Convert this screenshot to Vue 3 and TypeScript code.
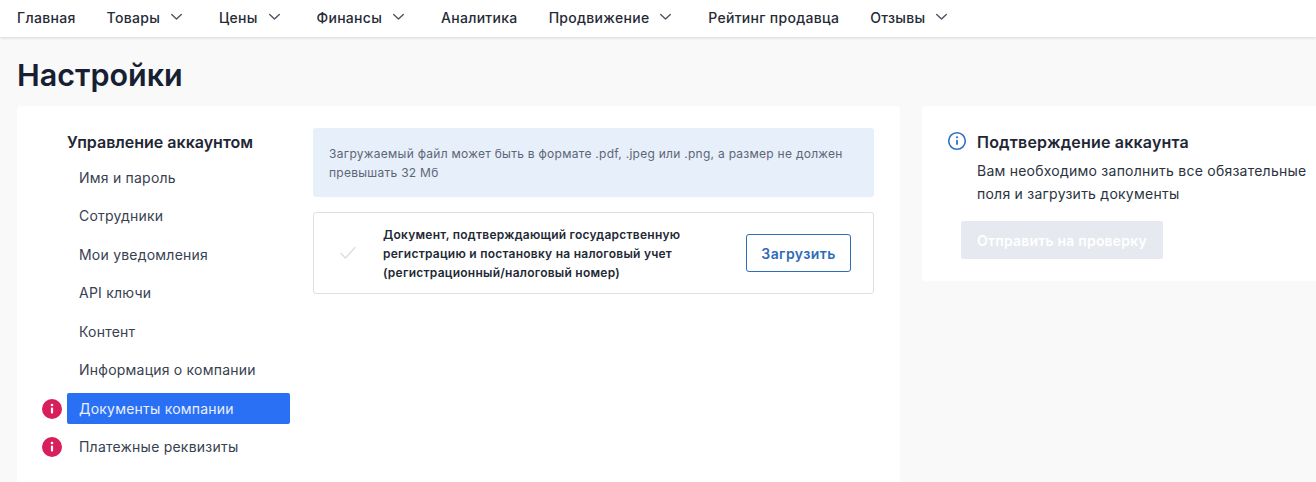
<script setup lang="ts">
interface NavItem { label: string; menu: boolean }
interface SideItem { label: string; active?: boolean; alert?: boolean }

const nav: NavItem[] = [
  { label: 'Главная', menu: false },
  { label: 'Товары', menu: true },
  { label: 'Цены', menu: true },
  { label: 'Финансы', menu: true },
  { label: 'Аналитика', menu: false },
  { label: 'Продвижение', menu: true },
  { label: 'Рейтинг продавца', menu: false },
  { label: 'Отзывы', menu: true },
]
const side: SideItem[] = [
  { label: 'Имя и пароль' },
  { label: 'Сотрудники' },
  { label: 'Мои уведомления' },
  { label: 'API ключи' },
  { label: 'Контент' },
  { label: 'Информация о компании' },
  { label: 'Документы компании', active: true, alert: true },
  { label: 'Платежные реквизиты', alert: true },
]
</script>

<template>
  <div class="page">
    <header class="topbar">
      <div v-for="item in nav" :key="item.label" class="nav-item">
        <span>{{ item.label }}</span>
        <svg v-if="item.menu" class="chev" width="13" height="8" viewBox="0 0 13 8" fill="none">
          <path d="M1.7 1.5 6.5 6l4.8-4.5" stroke="#4b5563" stroke-width="1.4" stroke-linecap="round" stroke-linejoin="round" />
        </svg>
      </div>
    </header>

    <h1 class="title">Настройки</h1>

    <div class="columns">
      <main class="card main-card">
        <aside class="sidebar">
          <h2 class="side-title">Управление аккаунтом</h2>
          <ul class="side-list">
            <li v-for="item in side" :key="item.label" class="side-row" :class="{ active: item.active }">
              <svg v-if="item.alert" class="alert" width="20" height="20" viewBox="0 0 20 20">
                <circle cx="10" cy="10" r="10" fill="#d81e5b" />
                <rect x="8.9" y="8.6" width="2.2" height="6" rx="1" fill="#fff" />
                <circle cx="10" cy="6" r="1.3" fill="#fff" />
              </svg>
              {{ item.label }}
            </li>
          </ul>
        </aside>

        <section class="content">
          <div class="banner">Загружаемый файл может быть в формате .pdf, .jpeg или .png, а размер не должен превышать 32 Мб</div>
          <div class="doc">
            <svg class="check" width="16" height="14" viewBox="0 0 16 14" fill="none">
              <path d="M1 7.5 5.5 12 15 1.5" stroke="#dcdfe3" stroke-width="1.5" stroke-linecap="round" stroke-linejoin="round" />
            </svg>
            <p class="doc-text">Документ, подтверждающий государственную регистрацию и постановку на налоговый учет (регистрационный/налоговый номер)</p>
            <button class="upload" type="button">Загрузить</button>
          </div>
        </section>
      </main>

      <aside class="card verify">
        <div class="verify-head">
          <svg width="20" height="20" viewBox="0 0 20 20" fill="none">
            <circle cx="10" cy="10" r="8.3" stroke="#2f6fc4" stroke-width="1.6" />
            <rect x="9.1" y="8.8" width="1.8" height="5.2" rx=".9" fill="#2f6fc4" />
            <circle cx="10" cy="6.3" r="1.1" fill="#2f6fc4" />
          </svg>
          <h3 class="verify-title">Подтверждение аккаунта</h3>
        </div>
        <p class="verify-text">Вам необходимо заполнить все обязательные поля и загрузить документы</p>
        <button class="send" type="button" disabled>Отправить на проверку</button>
      </aside>
    </div>
  </div>
</template>

<style>
html, body { margin: 0; height: 100%; overflow: hidden; background: #f9f9f9; }
</style>

<style scoped>
.page {
  height: 482px;
  overflow: hidden;
  display: flex;
  flex-direction: column;
  background: #f9f9f9;
  font-family: Inter, "Noto Sans", sans-serif;
  color: #1f2937;
}
.topbar {
  flex: none;
  height: 37px;
  display: flex;
  align-items: center;
  gap: 31px;
  padding: 0 0 3px 17px;
  box-sizing: border-box;
  background: #fff;
  box-shadow: 0 1px 3px rgba(0, 0, 0, .14);
  font-size: 14px;
  font-weight: 500;
  letter-spacing: .3px;
  color: #252b36;
}
.nav-item { display: flex; align-items: center; gap: 10px; white-space: nowrap; }
.nav-item .chev { margin-right: 4.8px; }
.title {
  flex: none;
  margin: 17px 0 11px 17px;
  font-size: 30.5px;
  line-height: 41px;
  font-weight: 600;
  color: #172033;
}
.columns { flex: 1; display: flex; gap: 22px; padding-left: 17px; min-height: 0; }
.card { background: #fff; border-radius: 4px; }
.main-card {
  flex: none;
  width: 883px;
  height: 400px;
  display: flex;
  gap: 23px;
  padding: 22px 26px 0 50px;
  box-sizing: border-box;
}
.sidebar { flex: none; width: 223px; }
.side-title {
  margin: 0 0 6px;
  font-size: 16px;
  line-height: 28px;
  font-weight: 600;
  color: #1f2735;
}
.side-list { list-style: none; margin: 0; padding: 0; display: flex; flex-direction: column; gap: 7.43px; }
.side-row {
  position: relative;
  height: 31px;
  line-height: 31px;
  padding-left: 12px;
  font-size: 14px;
  letter-spacing: .22px;
  color: #374151;
  border-radius: 2px;
  white-space: nowrap;
}
.side-row.active { background: #2970f5; color: #e9f0ff; }
.alert { position: absolute; left: -25px; top: 6px; }
.content { flex: 1; min-width: 0; }
.banner {
  box-sizing: border-box;
  height: 69px;
  padding: 16px 16px 0;
  background: #e7effb;
  border-radius: 3px;
  font-size: 12px;
  line-height: 19px;
  letter-spacing: .27px;
  color: #5d6675;
}
.doc {
  box-sizing: border-box;
  height: 82px;
  margin-top: 15px;
  display: flex;
  align-items: center;
  padding: 0 22px 0 26px;
  border: 1px solid #dcdfe4;
  border-radius: 3px;
  background: #fff;
}
.check { flex: none; margin-right: 27px; }
.doc-text {
  flex: 1;
  margin: 0;
  font-size: 12px;
  line-height: 19px;
  letter-spacing: .25px;
  font-weight: 600;
  color: #232a36;
  max-width: 330px;
}
.upload {
  margin-left: auto;
  flex: none;
  width: 105px;
  height: 38px;
  border: 1px solid #2f6cb8;
  border-radius: 3px;
  background: #fff;
  color: #2f6cb8;
  font: 600 14px Inter, sans-serif;
  letter-spacing: .4px;
}
.verify {
  flex: 1;
  height: 175px;
  padding: 24px 0 0 25px;
  box-sizing: border-box;
  border-radius: 4px 0 0 4px;
  min-width: 0;
}
.verify-head { display: flex; align-items: center; gap: 10px; height: 24px; }
.verify-head svg { margin-bottom: 2px; }
.verify-title { margin: 0; font-size: 16px; font-weight: 600; letter-spacing: .2px; color: #1f2735; white-space: nowrap; }
.verify-text {
  margin: 5px 0 0 30px;
  width: 340px;
  font-size: 14px;
  line-height: 23px;
  letter-spacing: .24px;
  color: #2b3340;
}
.send {
  display: block;
  margin: 16px 0 0 14px;
  width: 202px;
  height: 38px;
  border: 0;
  border-radius: 2px;
  background: #e6e9ef;
  color: #fff;
  font: 600 14px Inter, sans-serif;
  letter-spacing: .2px;
}
</style>
